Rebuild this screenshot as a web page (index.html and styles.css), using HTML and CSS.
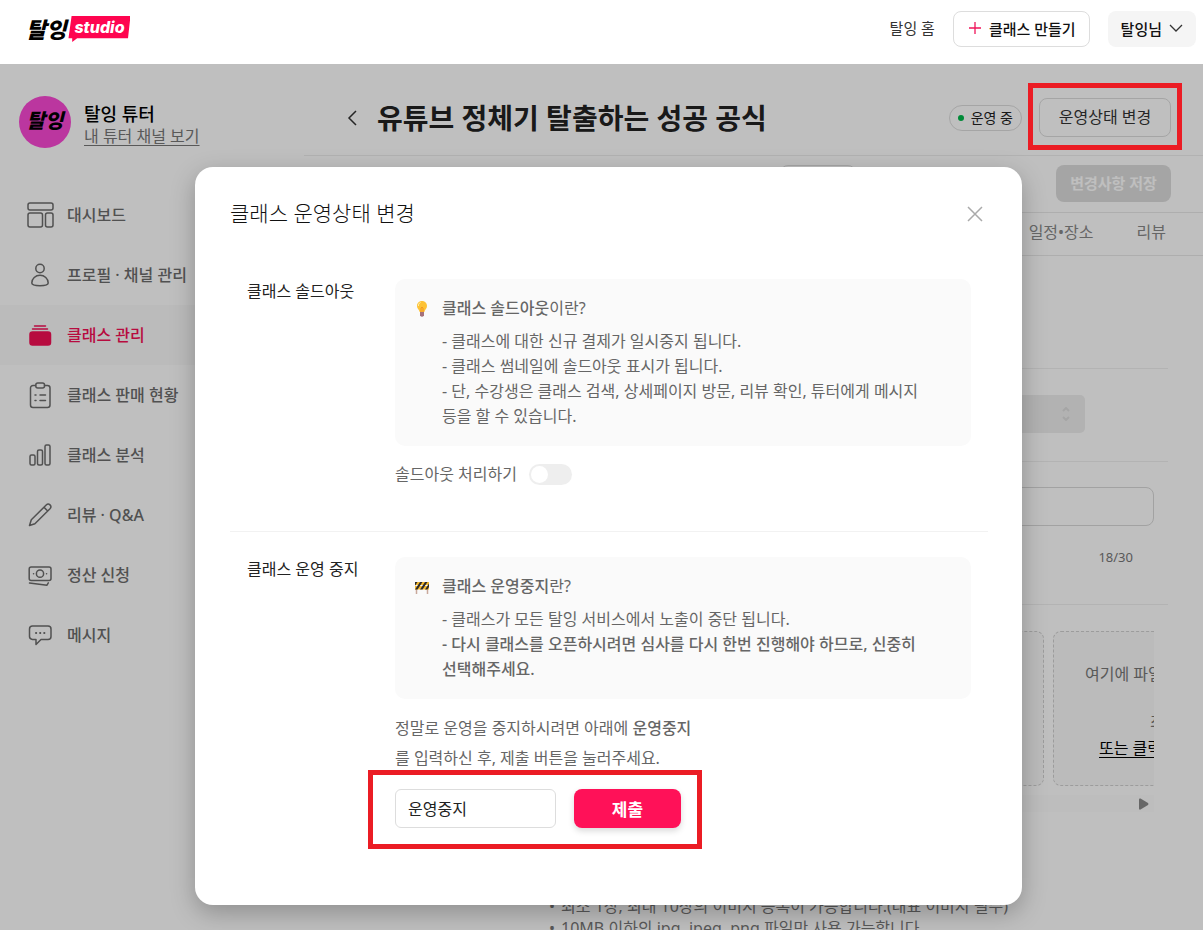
FILE: index.html
```html
<!DOCTYPE html>
<html lang="ko">
<head>
<meta charset="utf-8">
<meta name="viewport" content="width=device-width, initial-scale=1">
<title>탈잉 studio</title>
<link rel="stylesheet" href="styles.css">
</head>
<body>
<div class="app">
  <header class="topbar">
    <a class="logo" href="#"><span class="logo-name">탈잉</span><span class="logo-badge">studio</span></a>
    <nav class="topnav">
      <a class="home-link" href="#">탈잉 홈</a>
      <button class="create-btn" type="button">
        <svg width="12" height="12" viewBox="0 0 12 12" fill="none" stroke="#f0145a" stroke-width="1.3"><path d="M6 0v12M0 6h12"/></svg>
        클래스 만들기
      </button>
      <button class="user-btn" type="button">
        탈잉님
        <svg width="14" height="8" viewBox="0 0 14 8" fill="none" stroke="#333" stroke-width="1.3"><path d="M1 1l6 6 6-6"/></svg>
      </button>
    </nav>
  </header>

  <div class="shell">
    <aside class="sidebar">
      <div class="profile">
        <div class="avatar">탈잉</div>
        <div class="profile-text">
          <strong class="profile-name">탈잉 튜터</strong>
          <a class="profile-link" href="#">내 튜터 채널 보기</a>
        </div>
      </div>
      <nav class="menu">
        <a class="menu-item" href="#">
          <svg class="icon" viewBox="0 0 28 28"><rect x="2" y="2" width="25" height="7" rx="2"/><rect x="2" y="12" width="14.500" height="14" rx="2"/><rect x="19.500" y="12" width="7.500" height="14" rx="2"/></svg>
          대시보드</a>
        <a class="menu-item" href="#">
          <svg class="icon" viewBox="0 0 28 28"><circle cx="14" cy="7.500" r="4.200"/><path d="M5.800 22c0-4.500 3.700-7.700 8.200-7.700s8.200 3.200 8.200 7.700c0 1.800-3.600 2.700-8.200 2.700S5.800 23.800 5.800 22z"/></svg>
          프로필 · 채널 관리</a>
        <a class="menu-item active" href="#">
          <svg class="icon" viewBox="0 0 28 28"><path d="M8.500 5h11M6.500 8h15"/><rect class="solid" x="4" y="11" width="20.500" height="13" rx="2.500"/></svg>
          클래스 관리</a>
        <a class="menu-item" href="#">
          <svg class="icon" viewBox="0 0 28 28"><path d="M9.500 4.500H7A2.500 2.500 0 0 0 4.500 7v17A2.500 2.500 0 0 0 7 26.500h14.500A2.500 2.500 0 0 0 24 24V7a2.500 2.500 0 0 0-2.500-2.500H18.500"/><rect x="9.800" y="2" width="8.700" height="5" rx="2"/><path d="M9 14h1M14 14h5.500M9 19.500h1M14 19.500h5.500"/></svg>
          클래스 판매 현황</a>
        <a class="menu-item" href="#">
          <svg class="icon" viewBox="0 0 28 28"><rect x="4" y="14" width="5" height="10" rx="1.500"/><rect x="11.500" y="9" width="5" height="15" rx="1.500"/><rect x="19" y="4" width="5" height="20" rx="1.500"/></svg>
          클래스 분석</a>
        <a class="menu-item" href="#">
          <svg class="icon" viewBox="0 0 28 28"><path d="M3.500 24.500l1.800-5.700L20.200 4c2.600-2.600 6.300 1 3.800 3.700L8.900 22.700z M18 6.300l3.700 3.700"/></svg>
          리뷰 · Q&amp;A</a>
        <a class="menu-item" href="#">
          <svg class="icon" viewBox="0 0 28 28"><rect x="3.200" y="6" width="21.800" height="13.500" rx="2"/><circle cx="14" cy="12.700" r="3.600"/><path d="M7.500 12.700h.1M20.500 12.700h.1M3.500 22l17.500 2.200 1.300-2.400"/></svg>
          정산 신청</a>
        <a class="menu-item" href="#">
          <svg class="icon" viewBox="0 0 28 28"><path d="M6.500 5h15.500q3 0 3 3v7.500q0 3-3 3h-7l-5 5v-5H6.500q-3-.3-3-3V8q0-3 3-3z"/><path d="M10 12h.2M14.100 12h.2M18.200 12h.2" stroke-width="2"/></svg>
          메시지</a>
      </nav>
    </aside>

    <main class="content">
      <div class="title-row">
        <button class="back-btn" type="button" aria-label="뒤로"><svg width="10" height="16" viewBox="0 0 10 16" fill="none" stroke="#333" stroke-width="1.500"><path d="M9 1L2 8l7 7"/></svg></button>
        <h1 class="class-title">유튜브 정체기 탈출하는 성공 공식</h1>
        <span class="status-pill"><i class="status-dot"></i>운영 중</span>
        <span class="callout callout-status"><button class="status-btn" type="button">운영상태 변경</button></span>
      </div>
      <div class="action-row">
        <span class="ghost-btn"></span>
        <button class="save-btn" type="button" disabled>변경사항 저장</button>
      </div>
      <nav class="tabs"><a href="#">일정•장소</a><a href="#">리뷰</a></nav>

      <div class="form">
        <div class="form-row row-intro"></div>
        <div class="form-row row-category"><div class="select-box"><svg width="8" height="14" viewBox="0 0 8 14" fill="none" stroke="#dcdcdc" stroke-width="2"><path d="M1 4l3-3 3 3M1 10l3 3 3-3"/></svg></div></div>
        <div class="form-row row-title">
          <input class="title-input" type="text" aria-label="클래스 제목">
          <span class="counter">18/30</span>
        </div>
        <div class="form-row row-images">
          <div class="cards">
            <div class="card"></div>
            <div class="card"></div>
            <div class="card"><span class="drop-text">여기에 파일을</span><span class="drop-or">최</span><a class="drop-link" href="#">또는 클릭</a></div>
          </div>
          <div class="scroll-track"><svg width="10" height="12" viewBox="0 0 10 12"><path d="M1.500.500L9 5q1 1 0 2l-7.500 4.500Q0 12 0 10.500v-9Q0 0 1.500.500z" fill="#8a8a8a"/></svg></div>
          <ul class="notes">
            <li>최소 1장, 최대 10장의 이미지 등록이 가능합니다.(대표 이미지 필수)</li>
            <li>10MB 이하의 jpg, jpeg, png 파일만 사용 가능합니다.</li>
          </ul>
        </div>
      </div>
    </main>
  </div>

  <div class="overlay">
    <section class="modal" role="dialog" aria-labelledby="modal-title">
      <div class="modal-head">
        <h2 class="modal-title" id="modal-title">클래스 운영상태 변경</h2>
        <button class="close-btn" type="button" aria-label="닫기"><svg width="16" height="16" viewBox="0 0 16 16" fill="none" stroke="#aaa" stroke-width="1.500"><path d="M1 1l14 14M15 1L1 15"/></svg></button>
      </div>

      <div class="setting">
        <h3 class="setting-label">클래스 솔드아웃</h3>
        <div class="setting-body">
          <div class="info">
            <svg class="emoji" viewBox="0 0 16 16"><path d="M8 0C5 0 3 2.200 3 5c0 2.500 2 3.500 2.700 6h4.600C11 8.500 13 7.500 13 5c0-2.800-2-5-5-5z" fill="#fdc235"/><path d="M6.500 1.500C5 2 4.300 3.500 4.400 5" stroke="#fff0b0" fill="none"/><path d="M7 11V7l1-1 1 1v4" stroke="#f08c1c" fill="none" stroke-width=".8"/><path d="M6 11h4v3.500Q8 17 6 14.500z" fill="#a5727c"/></svg>
            <p class="info-title"><b>클래스 솔드아웃</b>이란?</p>
            <ul class="info-list">
              <li>- 클래스에 대한 신규 결제가 일시중지 됩니다.</li>
              <li>- 클래스 썸네일에 솔드아웃 표시가 됩니다.</li>
              <li>- 단, 수강생은 클래스 검색, 상세페이지 방문, 리뷰 확인, 튜터에게 메시지 등을 할 수 있습니다.</li>
            </ul>
          </div>
          <label class="toggle-row">솔드아웃 처리하기<input class="toggle" type="checkbox"></label>
        </div>
      </div>

      <div class="setting setting-stop">
        <h3 class="setting-label">클래스 운영 중지</h3>
        <div class="setting-body">
          <div class="info">
            <svg class="emoji" viewBox="0 0 16 16"><path d="M2.500 9v6M13.500 9v6" stroke="#c9a99c" stroke-width="1.500"/><path d="M1 3h14v3H1zM1 7h14v3.500H1z" fill="#f5b92e"/><path d="M1 10.500L6 3h2.500l-5 7.500zM6 10.500L11 3h2.500l-5 7.500zM11 10.500L15 4.500V8l-1.600 2.500zM1 3h2.500L1 6.700z" fill="#2d2a2a"/></svg>
            <p class="info-title"><b>클래스 운영중지</b>란?</p>
            <ul class="info-list">
              <li>- 클래스가 모든 탈잉 서비스에서 노출이 중단 됩니다.</li>
              <li class="strong">- 다시 클래스를 오픈하시려면 심사를 다시 한번 진행해야 하므로, 신중히 선택해주세요.</li>
            </ul>
          </div>
          <p class="confirm-text"><label for="confirm">정말로 운영을 중지하시려면 아래에 <b>운영중지</b><br>를 입력하신 후, 제출 버튼을 눌러주세요.</label></p>
          <form class="callout callout-form confirm-form">
            <input class="confirm-input" id="confirm" type="text" value="운영중지">
            <button class="submit-btn" type="button">제출</button>
          </form>
        </div>
      </div>
    </section>
  </div>
</div>
</body>
</html>
```
FILE: styles.css
```css
* { box-sizing: border-box; }

body, h1, h2, h3, p, ul { margin: 0; padding: 0; }

body, button, input {
  font-family: "Noto Sans", "Noto Sans CJK KR", sans-serif;
}

body {
  background: #fff;
  color: #222;
  font-size: 16px;
  line-height: 24px;
  word-break: keep-all;
}

a { color: inherit; text-decoration: none; }
ul { list-style: none; }
button { cursor: pointer; padding: 0; color: inherit; }
svg { display: block; flex: none; }

.app {
  height: 100vh;
  display: flex;
  flex-direction: column;
  overflow: hidden;
  position: relative;
}

/* Top bar */
.topbar {
  flex: none;
  height: 64px;
  padding: 0 7px 6px 26px;
  display: flex;
  align-items: center;
  justify-content: space-between;
  background: #fff;
}

.logo { display: flex; align-items: center; gap: 2px; }

.logo-name {
  font-size: 22px;
  line-height: 26px;
  font-weight: 900;
  font-style: italic;
  color: #000;
}

.logo-badge {
  width: 62px;
  height: 26px;
  padding-bottom: 4px;
  font: italic 800 16px/22px Inter, sans-serif;
  text-align: center;
  color: #fff;
  background: #ff0550;
  clip-path: polygon(5% 0, 100% 0, 96% 86%, 14% 86%, 6% 100%, 6% 86%, 0 86%);
}

.topnav { display: flex; align-items: center; gap: 18px; font-size: 15px; }
.home-link { color: #333; padding-bottom: 2px; }

.create-btn, .user-btn {
  height: 36px;
  display: flex;
  align-items: center;
  border-radius: 8px;
  font-size: 15px;
  font-weight: 500;
  color: #111;
}

.create-btn { gap: 8px; padding: 0 13px 2px 15px; border: 1px solid #ddd; background: #fff; }
.user-btn { gap: 7px; padding: 0 13px 2px; border: 0; background: #f5f5f5; }

/* Page behind the dialog */
.shell { flex: 1; min-height: 0; display: flex; }
.sidebar { flex: 0 0 304px; }

.profile {
  height: 121px;
  padding: 32px 19px 0;
  display: flex;
  align-items: flex-start;
  gap: 13px;
}

.avatar {
  width: 52px;
  height: 52px;
  border-radius: 50%;
  background: #fa48d4;
  color: #000;
  font-size: 20px;
  font-weight: 900;
  font-style: italic;
  line-height: 50px;
  text-align: center;
}

.profile-text { display: flex; flex-direction: column; padding-top: 6px; }
.profile-name { font-size: 18px; line-height: 24px; font-weight: 500; color: #000; }
.profile-link { line-height: 20px; color: #777; text-decoration: underline; text-underline-offset: 3px; }

.menu-item {
  height: 60px;
  padding: 0 26px;
  display: flex;
  align-items: center;
  gap: 13px;
  font-weight: 500;
  color: #6c6c6c;
}

.menu-item.active { background: #fafafa; color: #f50f55; }

.icon {
  width: 28px;
  height: 28px;
  fill: none;
  stroke: currentColor;
  stroke-width: 1.5;
  stroke-linecap: round;
  stroke-linejoin: round;
}

.icon .solid { fill: currentColor; }

.content { flex: 1; min-width: 0; }

.title-row {
  height: 92px;
  padding: 16px 32px 0 43px;
  display: flex;
  align-items: center;
  border-bottom: 1px solid #eee;
}

.back-btn { border: 0; background: none; margin-right: 20px; }
.class-title { flex: 1; font-size: 28px; line-height: 36px; font-weight: 700; color: #222; }

.status-pill {
  height: 26px;
  padding: 0 8px;
  display: flex;
  align-items: center;
  gap: 7px;
  border: 1px solid #ddd;
  border-radius: 13px;
  font-size: 14px;
  margin-right: 17px;
}

.status-dot { width: 6px; height: 6px; border-radius: 50%; background: #00b84a; }

.status-btn {
  width: 132px;
  height: 39px;
  padding-bottom: 3px;
  border: 1px solid #ddd;
  border-radius: 8px;
  background: none;
  font-size: 16px;
  color: #333;
}

/* Red frame that points out a control */
.callout { position: relative; }

.callout::after {
  content: "";
  position: absolute;
  z-index: 30;
  border: 5px solid #eb1c24;
  pointer-events: none;
}

.callout-status { display: flex; }
.callout-status::after { inset: -15px -11px -13px; }
.callout-form::after { inset: -19px -21px -21px -27px; }

.action-row {
  height: 57px;
  padding: 9px 32px 0;
  display: flex;
  justify-content: flex-end;
  border-bottom: 1px solid #e8e8e8;
}

.ghost-btn { width: 76px; height: 37px; margin-right: 200px; border: 1px solid #ddd; border-radius: 8px; }

.save-btn {
  width: 115px;
  height: 37px;
  padding-bottom: 2px;
  border: 0;
  border-radius: 8px;
  background: #ddd;
  color: #fff;
  font-size: 15px;
  font-weight: 700;
}

.tabs {
  height: 43px;
  padding: 0 37px 5px;
  display: flex;
  align-items: center;
  justify-content: flex-end;
  gap: 43px;
  border-bottom: 1px solid #e8e8e8;
  color: #888;
  font-size: 16px;
}

.form { padding: 0 35px; }
.form-row { padding: 26px 14px 0 210px; border-bottom: 1px solid #efefef; }
.row-intro { height: 113px; }
.row-category { height: 93px; padding-right: 83px; }
.row-title { height: 143px; padding-top: 25px; }

.select-box {
  height: 38px;
  padding-right: 15px;
  display: flex;
  align-items: center;
  justify-content: flex-end;
  border-radius: 5px;
  background: #eee;
}

.title-input {
  width: 100%;
  height: 39px;
  border: 1px solid #d8d8d8;
  border-radius: 8px;
  background: none;
  display: block;
}

.counter { display: block; padding: 19px 21px 0; font-size: 13px; text-align: right; color: #777; }

.cards { display: flex; gap: 9px; overflow: hidden; }

.card {
  flex: 0 0 243px;
  height: 155px;
  padding-top: 30px;
  display: flex;
  flex-direction: column;
  border: 1px dashed #d0d0d0;
  border-radius: 8px;
  background: #fafafa;
  white-space: nowrap;
}

.drop-text { padding-left: 31px; color: #777; }
.drop-or { padding: 24px 0 2px 96px; color: #777; }
.drop-link { padding-left: 45px; color: #000; text-decoration: underline; text-underline-offset: 3px; }

.scroll-track {
  height: 17px;
  margin-top: 9px;
  padding-right: 5px;
  display: flex;
  align-items: center;
  justify-content: flex-end;
  background: #fcfcfc;
}

.notes { padding-top: 83px; color: #777; line-height: 22px; white-space: nowrap; }
.notes li { display: flex; gap: 6px; }
.notes li::before { content: "•"; }

/* Dialog */
.overlay {
  position: absolute;
  z-index: 20;
  inset: 64px 0 0;
  padding: 103px 0 25px 14px;
  display: flex;
  justify-content: center;
  align-items: flex-start;
  background: rgba(0, 0, 0, .25);
}

.modal {
  width: 100%;
  max-width: 827px;
  padding: 32px 34px 77px 35px;
  border-radius: 18px;
  background: #fff;
  box-shadow: 0 8px 24px rgba(0, 0, 0, .25);
}

.modal-head { height: 80px; display: flex; justify-content: space-between; align-items: flex-start; padding-right: 5px; }
.modal-title { font-size: 21px; line-height: 28px; font-weight: 300; color: #111; }
.close-btn { border: 0; background: none; margin-top: 7px; }

.setting { padding: 0 17px 45px 17px; display: grid; grid-template-columns: 148px 1fr; }
.setting-label { font-size: 16px; line-height: 24px; font-weight: 400; color: #222; }
.setting-stop { padding-top: 25px; padding-bottom: 0; border-top: 1px solid #f2f2f2; }

.info {
  padding: 17px 34px 17px 19px;
  display: grid;
  grid-template-columns: 16px 1fr;
  column-gap: 12px;
  row-gap: 8px;
  border-radius: 10px;
  background: #fafafa;
  color: #666;
  line-height: 25px;
}

.info b, .confirm-text b, .info .strong { font-weight: 500; }
.emoji { width: 16px; height: 16px; margin-top: 5px; }
.info-list { grid-column: 2; }

.toggle-row { display: flex; align-items: center; gap: 12px; padding-top: 16px; color: #666; }

.toggle {
  appearance: none;
  width: 43px;
  height: 21px;
  margin: 0;
  padding: 2px;
  border-radius: 11px;
  background: #eee;
}

.toggle::before {
  content: "";
  display: block;
  width: 17px;
  height: 17px;
  border-radius: 50%;
  background: #fff;
}

.toggle:checked::before { margin-left: auto; }

.confirm-text { padding: 14px 0 16px; line-height: 30px; color: #666; }
.confirm-form { display: flex; gap: 18px; width: 286px; }

.confirm-input {
  flex: 1;
  min-width: 0;
  height: 39px;
  padding: 0 12px 2px;
  border: 1px solid #ddd;
  border-radius: 6px;
  font-size: 16px;
  color: #222;
}

.submit-btn {
  width: 107px;
  height: 39px;
  border: 0;
  border-radius: 8px;
  background: #ff1158;
  box-shadow: 0 3px 6px rgba(0, 0, 0, .15);
  color: #fff;
  font-size: 17px;
  font-weight: 700;
}
```
